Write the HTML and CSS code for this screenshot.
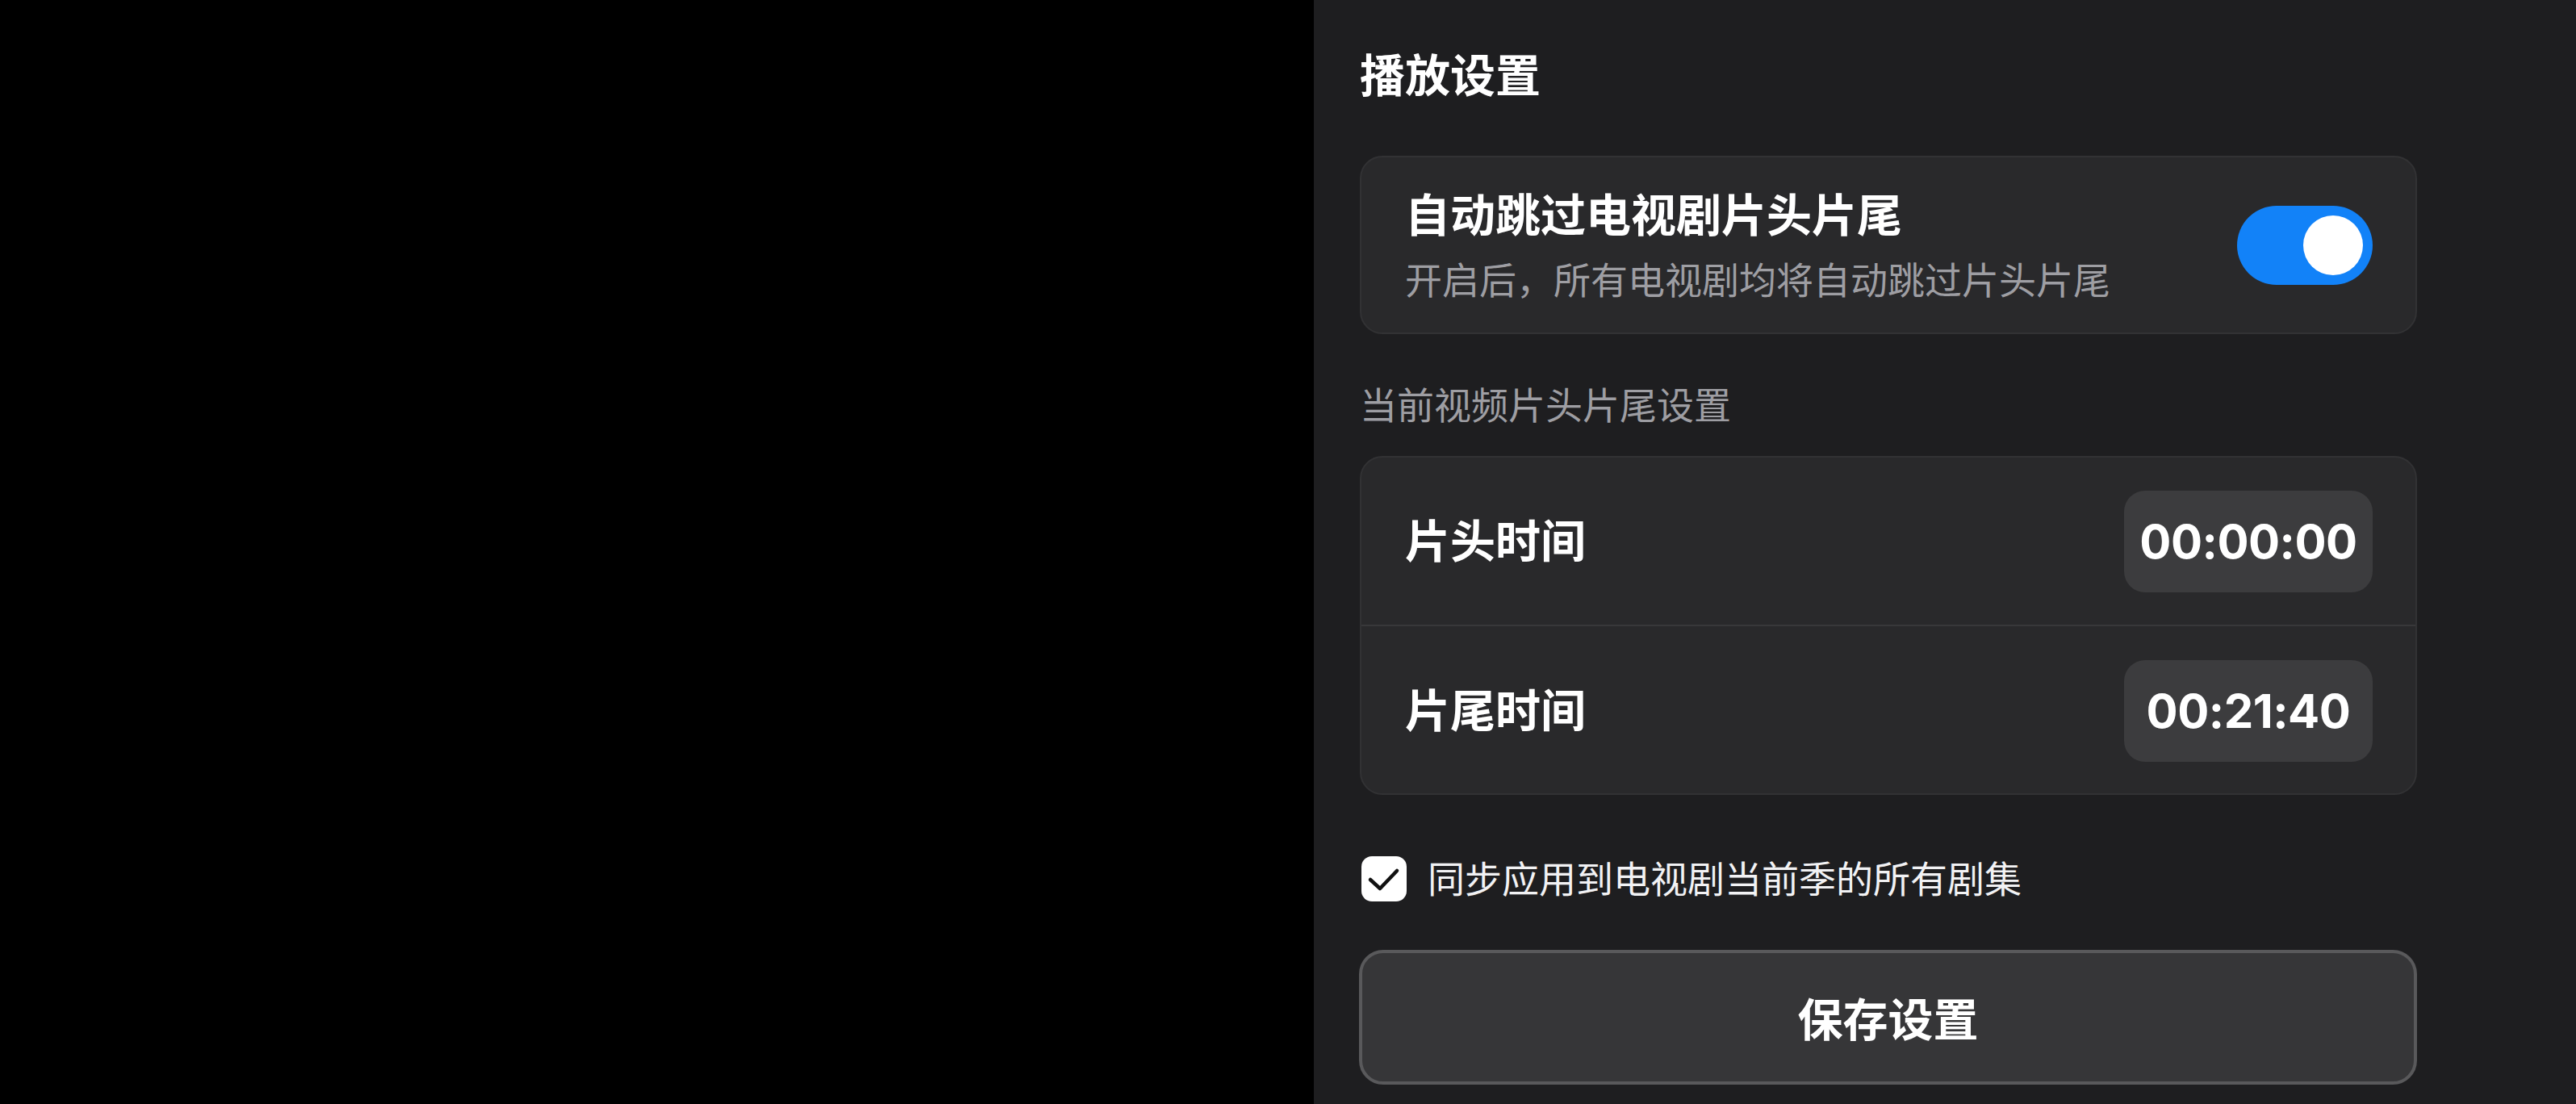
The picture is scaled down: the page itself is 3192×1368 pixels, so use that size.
FILE: index.html
```html
<!DOCTYPE html>
<html lang="zh-CN">
<head>
<meta charset="utf-8">
<title>播放设置</title>
<link rel="stylesheet" href="styles.css">
</head>
<body>
<div class="stage">
  <div class="video-area"></div>
  <aside class="panel">
    <div class="content">
      <h1 class="title">播放设置</h1>

      <section class="card card-auto">
        <div class="auto-text">
          <div class="auto-title">自动跳过电视剧片头片尾</div>
          <div class="auto-sub">开启后，所有电视剧均将自动跳过片头片尾</div>
        </div>
        <div class="toggle on"><span class="knob"></span></div>
      </section>

      <div class="section-label">当前视频片头片尾设置</div>

      <section class="card card-times">
        <div class="time-row">
          <span class="row-label">片头时间</span>
          <span class="time-pill">00:00:00</span>
        </div>
        <div class="time-row">
          <span class="row-label">片尾时间</span>
          <span class="time-pill">00:21:40</span>
        </div>
      </section>

      <label class="check-row">
        <span class="checkbox">
          <svg viewBox="0 0 56 56" width="56" height="56" aria-hidden="true">
            <path d="M11 29 L23 40 L44 18" fill="none" stroke="#111" stroke-width="4.5" stroke-linecap="round" stroke-linejoin="round"/>
          </svg>
        </span>
        <span class="check-label">同步应用到电视剧当前季的所有剧集</span>
      </label>

      <button class="save-btn">保存设置</button>
    </div>
  </aside>
</div>
</body>
</html>
```

FILE: styles.css
```css
* { box-sizing: border-box; }

html, body {
  margin: 0;
  padding: 0;
  background: #000;
  font-family: "Inter", "Noto Sans CJK SC", "Noto Sans", sans-serif;
  color: #fff;
}

.stage {
  display: flex;
  width: 3192px;
  height: 1368px;
  overflow: hidden;
}

.video-area {
  width: 1628px;
  flex: none;
  background: #000;
}

.panel {
  flex: 1;
  background: #1e1e20;
  padding: 54px 0 0 57px;
}

.content {
  width: 1310px;
  display: flex;
  flex-direction: column;
}

.title {
  margin: 0;
  font-size: 56px;
  line-height: 80px;
  font-weight: 700;
  color: #fff;
}

.card {
  background: #29292b;
  border: 2px solid #323234;
  border-radius: 28px;
}

.card-auto {
  margin-top: 59px;
  height: 221px;
  display: flex;
  align-items: center;
  justify-content: space-between;
  padding: 0 53px 0 54px;
}

.auto-text {
  display: flex;
  flex-direction: column;
  gap: 20px;
  padding-top: 2px;
}

.auto-title {
  font-size: 56px;
  line-height: 64px;
  font-weight: 700;
}

.auto-sub {
  font-size: 46px;
  line-height: 56px;
  color: #9e9ea3;
}

.toggle {
  width: 168px;
  height: 98px;
  border-radius: 49px;
  background: #1282f8;
  display: flex;
  align-items: center;
  justify-content: flex-end;
  padding-right: 12px;
  flex: none;
}

.knob {
  width: 74px;
  height: 74px;
  border-radius: 50%;
  background: #fff;
}

.section-label {
  margin-top: 58px;
  font-size: 46px;
  line-height: 60px;
  color: #9e9ea3;
}

.card-times {
  margin-top: 33px;
  display: flex;
  flex-direction: column;
}

.time-row {
  height: 207px;
  display: flex;
  align-items: center;
  justify-content: space-between;
  padding: 0 53px 0 54px;
}

.time-row + .time-row {
  border-top: 2px solid #38383a;
  height: 209px;
  padding-top: 2px;
}

.row-label {
  font-size: 56px;
  line-height: 64px;
  font-weight: 700;
}

.time-pill {
  width: 308px;
  height: 126px;
  border-radius: 26px;
  background: #3c3c3e;
  display: flex;
  align-items: center;
  justify-content: center;
  font-family: "Inter", "Noto Sans", sans-serif;
  font-size: 58px;
  font-weight: 700;
  letter-spacing: -0.5px;
}

.check-row {
  margin-top: 76px;
  display: flex;
  align-items: center;
  gap: 26px;
  height: 56px;
  padding-left: 2px;
}

.checkbox {
  width: 56px;
  height: 56px;
  border-radius: 13px;
  background: #fff;
  display: flex;
  flex: none;
}

.check-label {
  font-size: 46px;
  line-height: 60px;
  color: #f2f2f4;
}

.save-btn {
  margin-top: 60px;
  height: 167px;
  width: 1311px;
  margin-left: -1px;
  background: #363638;
  border: 4px solid #59595b;
  border-radius: 30px;
  color: #fff;
  font-family: "Inter", "Noto Sans CJK SC", sans-serif;
  font-size: 56px;
  font-weight: 700;
  padding: 0 0 2px;
}
```
